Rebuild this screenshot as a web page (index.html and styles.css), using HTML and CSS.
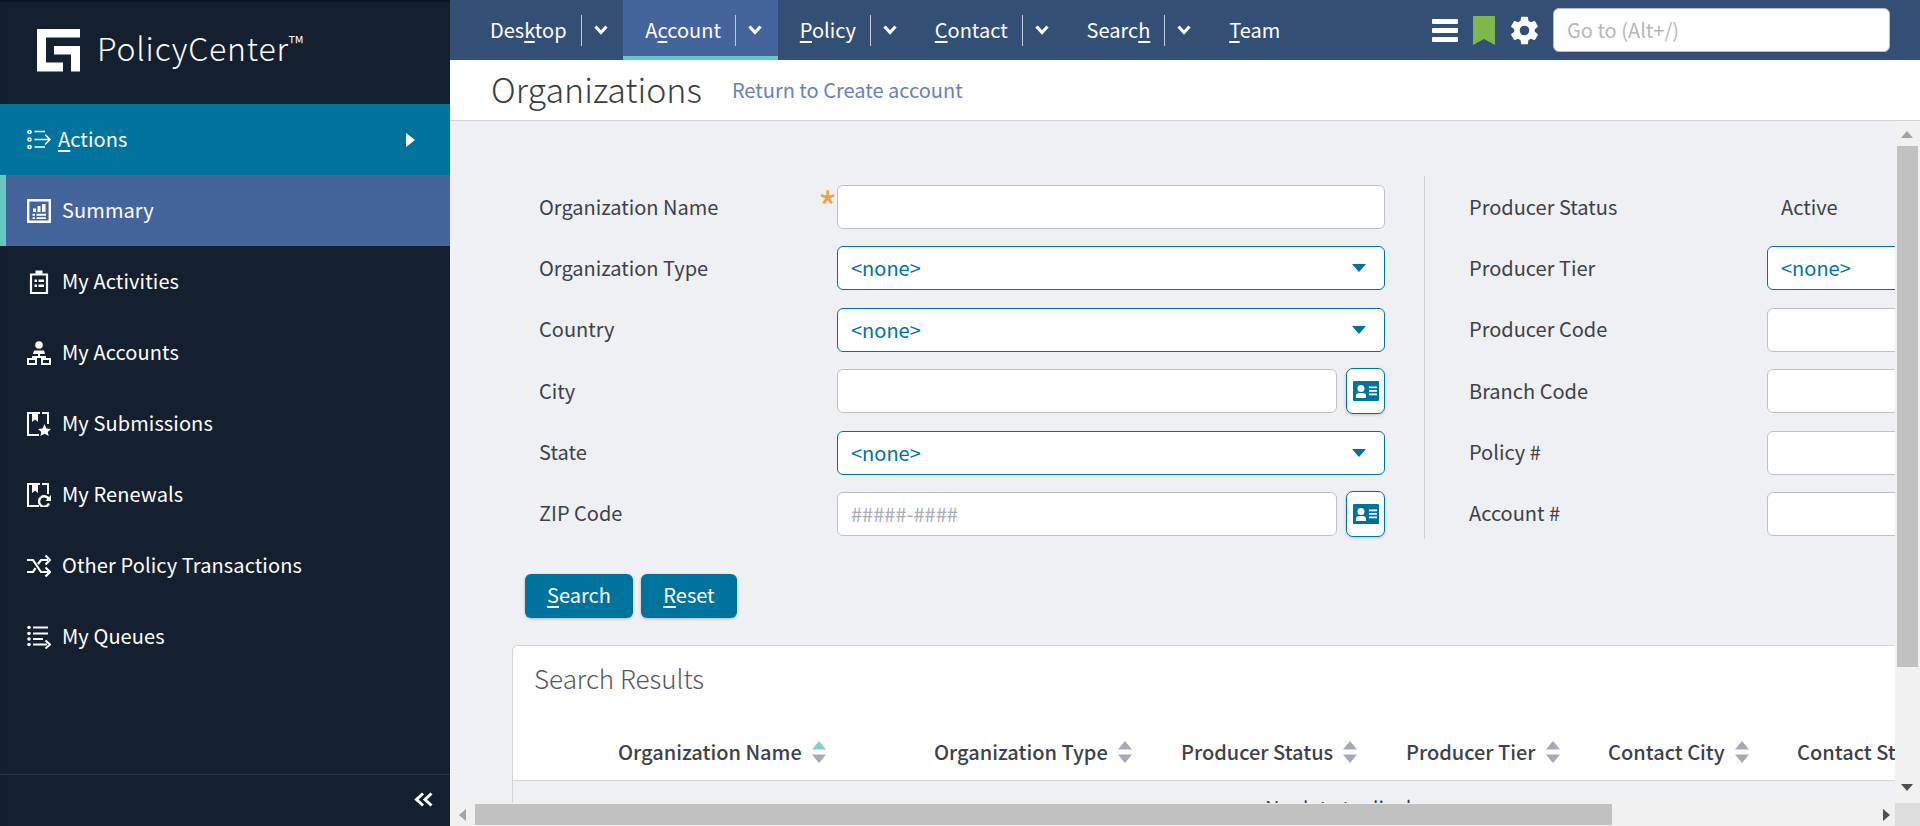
FILE: index.html
```html
<!DOCTYPE html>
<html lang="en">
<head>
<meta charset="utf-8">
<title>Organizations - PolicyCenter</title>
<link rel="stylesheet" href="styles.css">
</head>
<body>
<aside class="sidebar">
  <div class="brand">
    <svg class="logo" viewBox="0 0 43 43" aria-hidden="true"><path d="M0 0H43V8.500H9V33.500H26V42.500H0Z"/><path d="M17 17H43V42.500H34V25.500H17Z"/></svg>
    <span class="brand-name">PolicyCenter<sup class="tm">™</sup></span>
  </div>
  <a class="side-item actions">
    <svg class="side-icon" viewBox="0 0 24 24" aria-hidden="true"><g fill="none" stroke="#fff" stroke-width="1.500"><circle cx="2.500" cy="4" r="1.600"/><circle cx="2.500" cy="11.500" r="1.600"/><circle cx="2.500" cy="19" r="1.600"/><path d="M7.500 3.500H18M7.500 11.500H22M7.500 19H18M18 6.500L23 11.500L18 16.500"/></g></svg>
    <span class="side-label action-label"><u>A</u>ctions</span>
    <svg class="side-caret" viewBox="0 0 9 14" aria-hidden="true"><path d="M0 0L9 7L0 14Z" fill="#fff"/></svg>
  </a>
  <a class="side-item current">
    <svg class="side-icon" viewBox="0 0 24 24" aria-hidden="true"><path fill="none" stroke="#fff" stroke-width="2.400" d="M1.200 1.200H22.800V22.800H1.200Z"/><path fill="#fff" d="M6 9.500H9V13H6ZM10.500 7H13.500V13H10.500ZM15 5H18.500V13H15ZM5.500 14.800H8V16.800H5.500ZM9.500 14.800H19V16.800H9.500ZM5.500 18.300H8V20H5.500ZM9.500 18.300H19V20H9.500Z"/></svg>
    <span class="side-label">Summary</span>
  </a>
  <a class="side-item">
    <svg class="side-icon" viewBox="0 0 24 24" aria-hidden="true"><path fill="none" stroke="#fff" stroke-width="2.200" d="M4 4.500H20V23H4Z"/><path fill="#fff" d="M8.500 0.500H15.500V4.500H8.500ZM7.500 9.500H10V12H7.500ZM11.500 9.500H17V12H11.500ZM7.500 14.500H10V17H7.500ZM11.500 14.500H17V17H11.500Z"/></svg>
    <span class="side-label">My Activities</span>
  </a>
  <a class="side-item">
    <svg class="side-icon" viewBox="0 0 24 24" aria-hidden="true"><circle cx="12" cy="4" r="3.800" fill="#fff"/><path fill="#fff" d="M7 9.500H17L18 13H13V15H19V17H5V15H11V13H6Z"/><path fill="none" stroke="#fff" stroke-width="2" d="M1 18H9V23H1ZM15 18H23V23H15Z"/></svg>
    <span class="side-label">My Accounts</span>
  </a>
  <a class="side-item">
    <svg class="side-icon" viewBox="0 0 24 24" aria-hidden="true"><path fill="none" stroke="#fff" stroke-width="2" d="M12 23H1V1H21V12"/><path fill="#141f2f" d="M13 0H15V5H13Z"/><path fill="#fff" d="M5 1H11V10L8 7.500L5 10Z"/><path fill="#fff" d="M17.500 12L19.500 16.500L24 17L20.700 20L21.700 24L17.500 21.800L13.300 24L14.300 20L11 17L15.500 16.500Z"/></svg>
    <span class="side-label">My Submissions</span>
  </a>
  <a class="side-item">
    <svg class="side-icon" viewBox="0 0 24 24" aria-hidden="true"><path fill="none" stroke="#fff" stroke-width="2" d="M12 23H1V1H21V11"/><path fill="#141f2f" d="M13 0H15V5H13Z"/><path fill="#fff" d="M5 1H11V10L8 7.500L5 10Z"/><path fill="none" stroke="#fff" stroke-width="2.400" d="M22 16.500A5.200 5.200 0 1 0 22 20.500"/><path fill="#fff" d="M24 12V18H18.500Z"/></svg>
    <span class="side-label">My Renewals</span>
  </a>
  <a class="side-item">
    <svg class="side-icon" viewBox="0 0 24 24" aria-hidden="true"><g fill="none" stroke="#fff" stroke-width="2.200"><path d="M0 6H6L14 18H21M0 18H6L8.500 14.200M11 10L14 6H21"/><path d="M18.500 1.500L23 6L18.500 10.500M18.500 13.500L23 18L18.500 22.500"/></g></svg>
    <span class="side-label">Other Policy Transactions</span>
  </a>
  <a class="side-item">
    <svg class="side-icon" viewBox="0 0 24 24" aria-hidden="true"><g fill="#fff"><circle cx="2" cy="2.500" r="1.800"/><circle cx="2" cy="8.500" r="1.800"/><circle cx="2" cy="14" r="1.800"/><circle cx="2" cy="19.500" r="1.800"/><path d="M6 1.500H21V3.500H6ZM6 7.500H21V9.500H6ZM6 13H16V15H6ZM6 18.500H20V20.500H6Z"/></g><path fill="none" stroke="#fff" stroke-width="2" d="M18.500 15.500L23 19.500L18.500 23.500"/></svg>
    <span class="side-label">My Queues</span>
  </a>
  <div class="side-foot">
    <svg class="collapse" viewBox="0 0 20 15" aria-hidden="true"><path fill="none" stroke="#fff" stroke-width="3" d="M9 1.500L2.500 7.500L9 13.500M17.500 1.500L11 7.500L17.500 13.500"/></svg>
  </div>
</aside>

<main class="main">
  <header class="topbar">
    <nav class="tabs">
      <a class="tab"><span>Des<u>k</u>top</span><i class="tab-sep"></i><svg class="chev" viewBox="0 0 14 10" aria-hidden="true"><path fill="none" stroke="#fff" stroke-width="3.200" d="M1.500 1.500L7 7.500L12.500 1.500"/></svg></a>
      <a class="tab active"><span>A<u>c</u>count</span><i class="tab-sep"></i><svg class="chev" viewBox="0 0 14 10" aria-hidden="true"><path fill="none" stroke="#fff" stroke-width="3.200" d="M1.500 1.500L7 7.500L12.500 1.500"/></svg></a>
      <a class="tab"><span><u>P</u>olicy</span><i class="tab-sep"></i><svg class="chev" viewBox="0 0 14 10" aria-hidden="true"><path fill="none" stroke="#fff" stroke-width="3.200" d="M1.500 1.500L7 7.500L12.500 1.500"/></svg></a>
      <a class="tab"><span><u>C</u>ontact</span><i class="tab-sep"></i><svg class="chev" viewBox="0 0 14 10" aria-hidden="true"><path fill="none" stroke="#fff" stroke-width="3.200" d="M1.500 1.500L7 7.500L12.500 1.500"/></svg></a>
      <a class="tab"><span>Searc<u>h</u></span><i class="tab-sep"></i><svg class="chev" viewBox="0 0 14 10" aria-hidden="true"><path fill="none" stroke="#fff" stroke-width="3.200" d="M1.500 1.500L7 7.500L12.500 1.500"/></svg></a>
      <a class="tab"><span><u>T</u>eam</span></a>
    </nav>
    <div class="tools">
      <svg class="tool-menu" viewBox="0 0 26 23" aria-hidden="true"><path fill="#fff" d="M1 0H25A1 1 0 0 1 26 1V4A1 1 0 0 1 25 5H1A1 1 0 0 1 0 4V1A1 1 0 0 1 1 0ZM1 9H25A1 1 0 0 1 26 10V13A1 1 0 0 1 25 14H1A1 1 0 0 1 0 13V10A1 1 0 0 1 1 9ZM1 18H25A1 1 0 0 1 26 19V22A1 1 0 0 1 25 23H1A1 1 0 0 1 0 22V19A1 1 0 0 1 1 18Z"/></svg>
      <svg class="tool-mark" viewBox="0 0 22 29" aria-hidden="true"><path fill="#7eb84b" d="M1 0H21A1 1 0 0 1 22 1V29L11 23L0 29V1A1 1 0 0 1 1 0Z"/></svg>
      <svg class="tool-gear" viewBox="0 0 24 24" aria-hidden="true"><path fill="#fff" fill-rule="evenodd" d="M19.430 12.980c.04-.32.070-.64.070-.98s-.03-.660-.070-.980l2.110-1.650c.190-.150.240-.420.120-.640l-2-3.460c-.120-.220-.390-.300-.610-.220l-2.490 1c-.520-.400-1.080-.730-1.690-.980l-.380-2.650C14.460 2.180 14.250 2 14 2h-4c-.250 0-.460.180-.490.420l-.380 2.650c-.610.250-1.170.590-1.690.980l-2.490-1c-.230-.090-.490 0-.610.220l-2 3.460c-.130.220-.070.490.120.640l2.110 1.650c-.040.320-.070.650-.070.980s.03.660.070.980l-2.110 1.650c-.190.150-.240.420-.120.640l2 3.460c.120.220.390.300.610.220l2.490-1c.520.400 1.080.730 1.690.980l.380 2.650c.030.240.240.420.490.420h4c.250 0 .460-.180.490-.420l.380-2.650c.610-.250 1.170-.590 1.690-.980l2.490 1c.230.090.490 0 .610-.220l2-3.460c.120-.220.070-.490-.120-.640l-2.110-1.650zM12 15.500a3.500 3.500 0 1 1 0-7 3.500 3.500 0 0 1 0 7z"/></svg>
      <div class="goto">Go to (Alt+/)</div>
    </div>
  </header>

  <div class="titlebar">
    <h1 class="page-title">Organizations</h1>
    <a class="return-link">Return to Create account</a>
  </div>

  <div class="view-row">
    <div class="content">
      <section class="form">
        <div class="form-col">
          <div class="form-row">
            <label class="field-label">Organization Name</label>
            <div class="field required-field"><span class="required">*</span><div class="text-input"></div></div>
          </div>
          <div class="form-row">
            <label class="field-label">Organization Type</label>
            <div class="field"><div class="select-input"><span>&lt;none&gt;</span><svg class="sel-arrow" viewBox="0 0 14 8" aria-hidden="true"><path fill="#00739d" d="M0 0H14L7 8Z"/></svg></div></div>
          </div>
          <div class="form-row">
            <label class="field-label">Country</label>
            <div class="field"><div class="select-input"><span>&lt;none&gt;</span><svg class="sel-arrow" viewBox="0 0 14 8" aria-hidden="true"><path fill="#00739d" d="M0 0H14L7 8Z"/></svg></div></div>
          </div>
          <div class="form-row">
            <label class="field-label">City</label>
            <div class="field with-picker"><div class="text-input"></div>
              <button class="picker" type="button"><svg viewBox="0 0 26 20" aria-hidden="true"><path fill="#00739d" d="M1 0H25A1 1 0 0 1 26 1V19A1 1 0 0 1 25 20H1A1 1 0 0 1 0 19V1A1 1 0 0 1 1 0Z"/><circle cx="8" cy="7.500" r="3.500" fill="#fff"/><path fill="#fff" d="M3 17V14.500C3 12.500 5 12 8 12S13 12.500 13 14.500V17ZM16 5.500H24V7.200H16ZM16 9H24V10.700H16ZM16 12.500H24V14.200H16Z"/></svg></button>
            </div>
          </div>
          <div class="form-row">
            <label class="field-label">State</label>
            <div class="field"><div class="select-input"><span>&lt;none&gt;</span><svg class="sel-arrow" viewBox="0 0 14 8" aria-hidden="true"><path fill="#00739d" d="M0 0H14L7 8Z"/></svg></div></div>
          </div>
          <div class="form-row">
            <label class="field-label">ZIP Code</label>
            <div class="field with-picker"><div class="text-input placeholder">#####-####</div>
              <button class="picker" type="button"><svg viewBox="0 0 26 20" aria-hidden="true"><path fill="#00739d" d="M1 0H25A1 1 0 0 1 26 1V19A1 1 0 0 1 25 20H1A1 1 0 0 1 0 19V1A1 1 0 0 1 1 0Z"/><circle cx="8" cy="7.500" r="3.500" fill="#fff"/><path fill="#fff" d="M3 17V14.500C3 12.500 5 12 8 12S13 12.500 13 14.500V17ZM16 5.500H24V7.200H16ZM16 9H24V10.700H16ZM16 12.500H24V14.200H16Z"/></svg></button>
            </div>
          </div>
        </div>
        <div class="form-col right-col">
          <div class="form-row"><label class="field-label">Producer Status</label><div class="field static-value">Active</div></div>
          <div class="form-row"><label class="field-label">Producer Tier</label><div class="field"><div class="select-input"><span>&lt;none&gt;</span></div></div></div>
          <div class="form-row"><label class="field-label">Producer Code</label><div class="field"><div class="text-input"></div></div></div>
          <div class="form-row"><label class="field-label">Branch Code</label><div class="field"><div class="text-input"></div></div></div>
          <div class="form-row"><label class="field-label">Policy #</label><div class="field"><div class="text-input"></div></div></div>
          <div class="form-row"><label class="field-label">Account #</label><div class="field"><div class="text-input"></div></div></div>
        </div>
      </section>

      <div class="actions-row">
        <button class="btn btn-search" type="button"><u>S</u>earch</button>
        <button class="btn btn-reset" type="button"><u>R</u>eset</button>
      </div>

      <section class="card">
        <h2 class="card-title">Search Results</h2>
        <div class="table-head">
          <div class="th">Organization Name<svg class="sort" viewBox="0 0 14 22" aria-hidden="true"><path class="sort-on" d="M7 0L14 8.500H0Z"/><path class="sort-off" d="M0 13.500H14L7 22Z"/></svg></div>
          <div class="th">Organization Type<svg class="sort" viewBox="0 0 14 22" aria-hidden="true"><path class="sort-off" d="M7 0L14 8.500H0Z"/><path class="sort-off" d="M0 13.500H14L7 22Z"/></svg></div>
          <div class="th">Producer Status<svg class="sort" viewBox="0 0 14 22" aria-hidden="true"><path class="sort-off" d="M7 0L14 8.500H0Z"/><path class="sort-off" d="M0 13.500H14L7 22Z"/></svg></div>
          <div class="th">Producer Tier<svg class="sort" viewBox="0 0 14 22" aria-hidden="true"><path class="sort-off" d="M7 0L14 8.500H0Z"/><path class="sort-off" d="M0 13.500H14L7 22Z"/></svg></div>
          <div class="th">Contact City<svg class="sort" viewBox="0 0 14 22" aria-hidden="true"><path class="sort-off" d="M7 0L14 8.500H0Z"/><path class="sort-off" d="M0 13.500H14L7 22Z"/></svg></div>
          <div class="th">Contact State<svg class="sort" viewBox="0 0 14 22" aria-hidden="true"><path class="sort-off" d="M7 0L14 8.500H0Z"/><path class="sort-off" d="M0 13.500H14L7 22Z"/></svg></div>
        </div>
        <div class="table-empty">No data to display</div>
      </section>
    </div>

    <div class="vbar">
      <svg class="bar-arrow up" viewBox="0 0 12 7" aria-hidden="true"><path fill="#a3a3a3" d="M6 0L12 7H0Z"/></svg>
      <div class="vthumb"></div>
      <svg class="bar-arrow down" viewBox="0 0 12 7" aria-hidden="true"><path fill="#505050" d="M0 0H12L6 7Z"/></svg>
    </div>
  </div>

  <div class="hbar">
    <svg class="bar-arrow left" viewBox="0 0 7 12" aria-hidden="true"><path fill="#a3a3a3" d="M0 6L7 0V12Z"/></svg>
    <div class="hthumb"></div>
    <svg class="bar-arrow right" viewBox="0 0 7 12" aria-hidden="true"><path fill="#505050" d="M7 6L0 0V12Z"/></svg>
    <div class="corner"></div>
  </div>
</main>
</body>
</html>
```

FILE: styles.css
```css
* { box-sizing: border-box; }
html, body { height: 100%; }
body {
  margin: 0;
  display: flex;
  height: 100vh;
  overflow: hidden;
  font-family: "Noto Sans CJK SC", "Noto Sans", sans-serif;
  font-size: 20px;
  line-height: 26px;
  color: #3d4148;
  background: #eff0f4;
}
a { color: inherit; text-decoration: none; }
u { text-underline-offset: 3px; text-decoration-thickness: 2px; }

.sidebar {
  width: 450px;
  flex: none;
  display: flex;
  flex-direction: column;
  background: #141f2f;
  color: #fff;
  box-shadow: inset 0 3px 3px -2px rgba(0, 0, 0, .5);
}
.brand {
  height: 104px;
  flex: none;
  display: flex;
  align-items: center;
  padding-left: 37px;
  gap: 17px;
}
.logo { width: 43px; height: 43px; fill: #fff; margin-top: -4px; }
.brand-name {
  font-size: 32px;
  font-weight: 200;
  line-height: 40px;
  letter-spacing: .8px;
  margin-top: -10px;
  white-space: nowrap;
}
.tm { font-size: 21px; line-height: 0; vertical-align: 9px; letter-spacing: 0; }
.side-item {
  height: 71px;
  flex: none;
  display: flex;
  align-items: center;
  padding-left: 27px;
}
.side-icon { width: 24px; height: 24px; flex: none; margin-right: 12px; }
.side-label { white-space: nowrap; letter-spacing: .1px; margin-left: -1px; margin-top: -2px; }
.action-label { margin-left: -5px; }
.actions { background: #00739d; position: relative; padding-right: 35px; }
.side-caret { width: 9px; height: 14px; margin-left: auto; }
.current { background: #44649b; border-left: 6px solid #67c7c2; padding-left: 21px; }
.side-foot {
  margin-top: auto;
  height: 52px;
  flex: none;
  border-top: 1px solid #2a3647;
  display: flex;
  justify-content: flex-end;
  align-items: center;
  padding-right: 16px;
}
.collapse { width: 20px; height: 15px; margin-top: -2px; }

.main { flex: 1; min-width: 0; display: flex; flex-direction: column; }
.topbar {
  height: 60px;
  flex: none;
  display: flex;
  align-items: stretch;
  justify-content: space-between;
  background: #344f76;
  color: #fff;
  padding-left: 18px;
  padding-right: 30px;
}
.tabs { display: flex; }
.tab {
  display: flex;
  align-items: center;
  padding: 0 15.800px 0 22px;
  white-space: nowrap;
}
.tab-sep {
  width: 1px;
  height: 31px;
  margin: 0 12px 0 14px;
  background: #c3ccd8;
}
.chev { width: 14px; height: 10px; }
.active { background: #44649b; border-bottom: 4px solid #67c7c2; padding-top: 4px; }
.tools { display: flex; align-items: center; }
.tool-menu { width: 26px; height: 23px; margin-right: 15px; }
.tool-mark { width: 22px; height: 29px; margin-right: 13px; }
.tool-gear { width: 33px; height: 33px; margin-right: 12px; }
.goto {
  width: 337px;
  height: 44px;
  background: #fff;
  border: 1px solid #b9bcc2;
  border-radius: 6px;
  padding: 0 13px;
  line-height: 42px;
  color: #b5b8bd;
}

.titlebar {
  height: 61px;
  flex: none;
  background: #fff;
  border-bottom: 1px solid #d3d4d6;
  display: flex;
  align-items: center;
  padding-left: 41px;
  gap: 30px;
}
.page-title {
  margin: -2px 0 0;
  font-size: 34px;
  font-weight: 200;
  line-height: 50px;
  color: #3a3d42;
  white-space: nowrap;
}
.return-link { color: #6c80b6; white-space: nowrap; }

.view-row { flex: 1; min-height: 0; display: flex; }
.content { flex: 1; min-width: 0; overflow: hidden; padding-top: 64px; }
.form { display: flex; width: 1700px; padding-left: 89px; }
.form-col { display: flex; flex-direction: column; gap: 17.400px; width: 885px; flex: none; padding-right: 39px; }
.right-col {
  width: 700px;
  border-left: 1px solid #cfd0d4;
  padding-left: 44px;
  padding-right: 0;
  margin: -9px 0 -3px;
  padding-top: 9px;
  padding-bottom: 3px;
}
.form-row { display: flex; align-items: center; height: 44px; }
.field-label { width: 298px; flex: none; white-space: nowrap; margin-top: -1px; }
.field { flex: 1; min-width: 0; position: relative; display: flex; align-items: center; }
.text-input {
  flex: 1;
  height: 44px;
  background: #fff;
  border: 1px solid #bfc1c5;
  border-radius: 6px;
  padding: 0 13px;
  line-height: 42px;
  min-width: 0;
}
.placeholder { color: #a8abb1; }
.select-input {
  flex: 1;
  height: 44px;
  background: #fff;
  border: 1px solid #00739d;
  border-radius: 6px;
  padding: 0 18px 0 13px;
  line-height: 42px;
  color: #00739d;
  display: flex;
  align-items: center;
  justify-content: space-between;
}
.sel-arrow { width: 14px; height: 8px; }
.required {
  position: absolute;
  left: -19px;
  top: 0;
  color: #f0a14c;
  font-size: 42px;
  line-height: 42px;
}
.with-picker { gap: 9px; }
.picker {
  width: 39px;
  height: 46px;
  flex: none;
  padding: 0;
  background: #fff;
  border: 1px solid #00739d;
  border-radius: 7px;
  box-shadow: 0 1px 3px rgba(0, 0, 0, .2);
  display: flex;
  align-items: center;
  justify-content: center;
}
.picker svg { width: 26px; height: 20px; }
.static-value { padding-left: 14px; }

.actions-row { display: flex; gap: 8px; margin-top: 38px; padding-left: 75px; }
.btn {
  height: 44px;
  border: 0;
  border-radius: 6px;
  background: #00739d;
  color: #fff;
  font: inherit;
  line-height: 42px;
  padding: 0 0 2px;
  box-shadow: 0 1px 3px rgba(0, 0, 0, .25);
}
.btn-search { width: 108px; }
.btn-reset { width: 96px; }

.card {
  margin: 27px 0 0 62px;
  width: 1600px;
  background: #fff;
  border: 1px solid #d3d4d8;
  border-right: 0;
  border-radius: 6px 0 0 0;
}
.card-title {
  margin: 0;
  height: 65px;
  padding: 12px 0 0 21px;
  font-size: 26px;
  font-weight: 200;
  line-height: 40px;
  color: #55585e;
}
.table-head {
  height: 70px;
  padding: 0 0 15px 105px;
  display: grid;
  grid-template-columns: 316px 247px 225px 202px 189px 260px;
  align-items: end;
  border-bottom: 1px solid #d5d7db;
}
.th { font-weight: 500; display: flex; align-items: center; gap: 10px; white-space: nowrap; color: #3d4148; }
.sort { width: 14px; height: 22px; flex: none; }
.sort-on { fill: #7ed0cd; }
.sort-off { fill: #a4a9b6; }
.table-empty {
  background: #eff0f4;
  height: 80px;
  padding-top: 14px;
  padding-left: 752px;
  white-space: nowrap;
}

.vbar {
  width: 25px;
  flex: none;
  background: #f1f1f1;
  display: flex;
  flex-direction: column;
  align-items: center;
  position: relative;
  padding-top: 25px;
}
.vthumb { width: 21px; height: 521px; background: #c1c1c1; }
.bar-arrow { position: absolute; }
.up { width: 12px; height: 7px; top: 10px; left: 6px; }
.down { width: 12px; height: 7px; bottom: 12px; left: 6px; }
.hbar {
  height: 23px;
  flex: none;
  background: #f1f1f1;
  position: relative;
  padding: 1px 0 1px 25px;
}
.hthumb { width: 1137px; height: 21px; background: #c1c1c1; }
.left { width: 7px; height: 12px; left: 9px; top: 6px; }
.right { width: 7px; height: 12px; right: 30px; top: 6px; }
.corner { position: absolute; right: 0; top: 0; bottom: 0; width: 25px; background: #dcdcdc; }
```
